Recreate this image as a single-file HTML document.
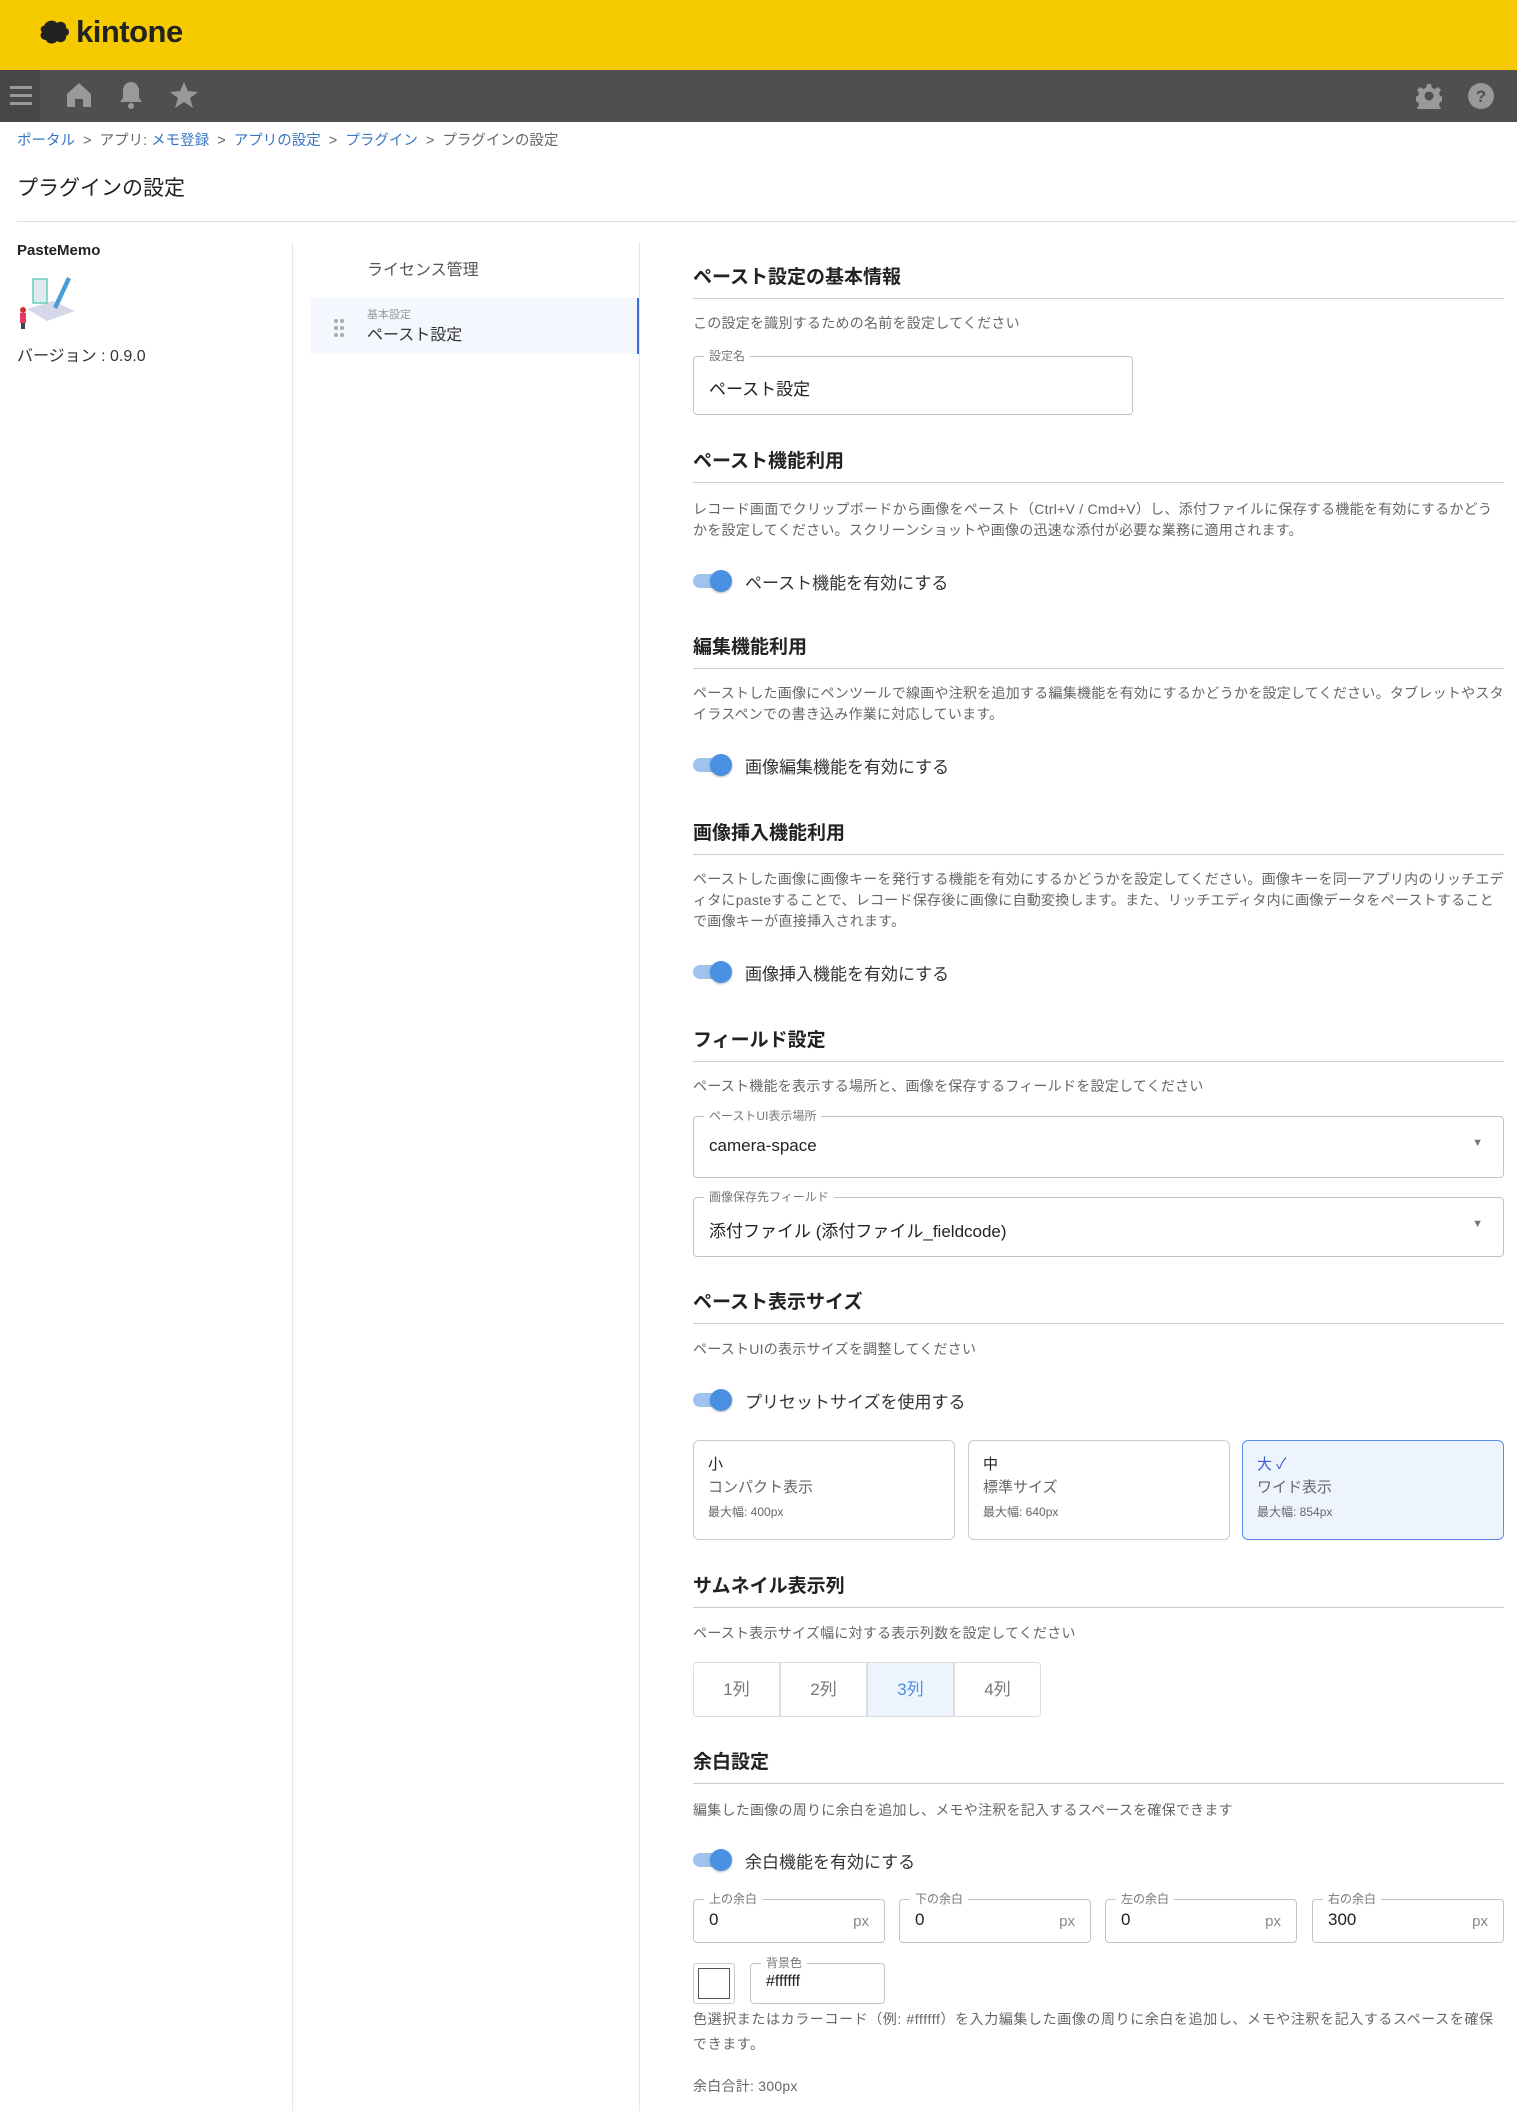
<!DOCTYPE html>
<html><head><meta charset="utf-8"><style>
*{box-sizing:border-box;margin:0;padding:0}
body{width:1517px;height:2111px;position:relative;background:#fff;font-family:"Liberation Sans","Noto Sans CJK JP",sans-serif;color:#333;overflow:hidden}
.a{position:absolute}
.h{position:absolute;left:693px;width:811px;font-size:19px;font-weight:bold;color:#222;border-bottom:1px solid #ccc;padding-bottom:8px;line-height:24px}
.d{position:absolute;left:693px;width:811px;font-size:14px;letter-spacing:0.25px;color:#666;line-height:21px}
.tg{position:absolute;left:693px;height:24px;display:flex;align-items:center;font-size:17px;color:#333}
.tg i{display:block;width:36px;height:14px;border-radius:7px;background:#9ec3ef;position:relative;margin-right:16px}
.tg i:after{content:"";position:absolute;right:-3px;top:-4px;width:22px;height:22px;border-radius:50%;background:#4a90e2;box-shadow:0 1px 2px rgba(0,0,0,.3)}
.f{position:absolute;border:1px solid #c4c4c4;border-radius:4px}
.f label{position:absolute;top:-9px;left:10px;background:#fff;padding:0 5px;font-size:12px;color:#777;line-height:16px}
.f span.v{position:absolute;left:15px;font-size:17px;color:#222}
.px{position:absolute;right:15px;top:13px;font-size:15px;color:#888}
.card{position:absolute;top:1440px;height:100px;border:1px solid #ccc;border-radius:6px;padding:14px 14px}
.card b{display:block;font-weight:normal;font-size:15px;color:#222;line-height:20px}
.card s{display:block;text-decoration:none;font-size:15px;color:#666;line-height:26px}
.card u{display:block;text-decoration:none;font-size:12px;color:#666;line-height:22px}
.btn{position:absolute;top:1662px;height:55px;width:87px;border:1px solid #ddd;text-align:center;line-height:53px;font-size:17px;color:#777}
.dot{position:absolute;width:4px;height:4px;border-radius:50%;background:#aaa}
</style></head><body>
<div class="a" style="left:0;top:0;width:1517px;height:70px;background:#f5cb00"></div>
<div class="a" style="left:38px;top:18px;width:32px;height:30px">
<svg width="32" height="30" viewBox="0 0 32 30"><path d="M6 8c2-6 10-7 13-3 4-3 10 0 9 5 4 1 4 7 0 8 1 5-5 8-9 5-3 4-10 3-11-1-5 0-7-5-4-8-3-3 0-7 2-6z" fill="#222"/></svg></div>
<div class="a" style="left:76px;top:14px;font-size:31px;font-weight:bold;color:#222;letter-spacing:-0.5px">kintone</div>
<div class="a" style="left:0;top:70px;width:1517px;height:52px;background:#4f4f4f"></div>
<div class="a" style="left:0;top:70px;width:40px;height:52px;background:#474747"></div>
<svg class="a" style="left:10px;top:84px" width="22" height="22" viewBox="0 0 22 22" fill="#999"><rect y="2" width="22" height="3"/><rect y="10" width="22" height="3"/><rect y="18" width="22" height="3"/></svg>
<svg class="a" style="left:66px;top:82px" width="26" height="26" viewBox="0 0 26 26" fill="#999"><path d="M13 1L1 12v13h8v-8h8v8h8V12z"/></svg>
<svg class="a" style="left:118px;top:81px" width="26" height="28" viewBox="0 0 26 28" fill="#999"><path d="M13 1c-5 0-8 4-8 9v7l-3 4h22l-3-4v-7c0-5-3-9-8-9z"/><circle cx="13" cy="25" r="3"/></svg>
<svg class="a" style="left:170px;top:82px" width="28" height="26" viewBox="0 0 28 26" fill="#999"><path d="M14 0l4 9 10 1-8 6 3 10-9-6-9 6 3-10-8-6 10-1z"/></svg>
<svg class="a" style="left:1416px;top:83px" width="26" height="26" viewBox="0 0 26 26"><path fill="#999" d="M11 1h4l1 4 3 1 3-2 3 3-2 3 1 3 4 1v4l-4 1-1 3 2 3-3 3-3-2-3 1-1 4h-4l-1-4-3-1-3 2-3-3 2-3-1-3-4-1v-4l4-1 1-3-2-3 3-3 3 2 3-1z"/><circle cx="13" cy="13" r="4.5" fill="#4f4f4f"/></svg>
<svg class="a" style="left:1468px;top:83px" width="26" height="26" viewBox="0 0 26 26"><circle cx="13" cy="13" r="13" fill="#999"/><text x="13" y="19" font-size="17" font-weight="bold" text-anchor="middle" fill="#4f4f4f" font-family="Liberation Sans">?</text></svg>
<div class="a" style="left:17px;top:131px;font-size:14.5px;color:#666;line-height:20px"><span style="color:#3b76c4">ポータル</span> &nbsp;&gt;&nbsp; アプリ: <span style="color:#3b76c4">メモ登録</span> &nbsp;&gt;&nbsp; <span style="color:#3b76c4">アプリの設定</span> &nbsp;&gt;&nbsp; <span style="color:#3b76c4">プラグイン</span> &nbsp;&gt;&nbsp; プラグインの設定</div>
<div class="a" style="left:17px;top:172px;font-size:21px;color:#222">プラグインの設定</div>
<div class="a" style="left:17px;top:221px;width:1500px;height:1px;background:#ddd"></div>
<div class="a" style="left:17px;top:242px;font-size:15px;font-weight:bold;color:#222">PasteMemo</div>
<svg class="a" style="left:17px;top:275px" width="62" height="55" viewBox="0 0 62 55"><path d="M10 34l26-8 22 10-28 10z" fill="#d7d7ea"/><rect x="16" y="4" width="14" height="24" fill="#dfe9f2" stroke="#6cb" stroke-width="1.5"/><path d="M36 32l14-30 4 2-14 30z" fill="#4a9ed8"/><circle cx="6" cy="35" r="3" fill="#c33"/><rect x="3" y="38" width="6" height="10" fill="#e03a6b"/><rect x="4" y="48" width="4" height="6" fill="#345"/></svg>
<div class="a" style="left:17px;top:342px;font-size:16px;color:#333">バージョン : 0.9.0</div>
<div class="a" style="left:292px;top:242px;width:1px;height:1869px;background:#e5e5e5"></div>
<div class="a" style="left:639px;top:242px;width:1px;height:1869px;background:#e5e5e5"></div>
<div class="a" style="left:367px;top:256px;font-size:16px;color:#555">ライセンス管理</div>
<div class="a" style="left:311px;top:298px;width:328px;height:56px;background:#f4f7fd;border-right:2px solid #3b6fd8"></div>
<div class="dot" style="left:334px;top:319px"></div><div class="dot" style="left:340px;top:319px"></div>
<div class="dot" style="left:334px;top:326px"></div><div class="dot" style="left:340px;top:326px"></div>
<div class="dot" style="left:334px;top:333px"></div><div class="dot" style="left:340px;top:333px"></div>
<div class="a" style="left:367px;top:306px;font-size:11px;color:#999">基本設定</div>
<div class="a" style="left:367px;top:321px;font-size:16px;color:#333">ペースト設定</div>

<div class="h" style="top:266px">ペースト設定の基本情報</div>
<div class="d" style="top:313px">この設定を識別するための名前を設定してください</div>
<div class="f" style="left:693px;top:356px;width:440px;height:59px"><label>設定名</label><span class="v" style="top:18px">ペースト設定</span></div>

<div class="h" style="top:450px">ペースト機能利用</div>
<div class="d" style="top:499px">レコード画面でクリップボードから画像をペースト（Ctrl+V / Cmd+V）し、添付ファイルに保存する機能を有効にするかどうかを設定してください。スクリーンショットや画像の迅速な添付が必要な業務に適用されます。</div>
<div class="tg" style="top:569px"><i></i>ペースト機能を有効にする</div>

<div class="h" style="top:636px">編集機能利用</div>
<div class="d" style="top:683px">ペーストした画像にペンツールで線画や注釈を追加する編集機能を有効にするかどうかを設定してください。タブレットやスタイラスペンでの書き込み作業に対応しています。</div>
<div class="tg" style="top:753px"><i></i>画像編集機能を有効にする</div>

<div class="h" style="top:822px">画像挿入機能利用</div>
<div class="d" style="top:869px">ペーストした画像に画像キーを発行する機能を有効にするかどうかを設定してください。画像キーを同一アプリ内のリッチエディタにpasteすることで、レコード保存後に画像に自動変換します。また、リッチエディタ内に画像データをペーストすることで画像キーが直接挿入されます。</div>
<div class="tg" style="top:960px"><i></i>画像挿入機能を有効にする</div>

<div class="h" style="top:1029px">フィールド設定</div>
<div class="d" style="top:1076px">ペースト機能を表示する場所と、画像を保存するフィールドを設定してください</div>
<div class="f" style="left:693px;top:1116px;width:811px;height:62px"><label>ペーストUI表示場所</label><span class="v" style="top:19px">camera-space</span><span class="a" style="right:20px;top:20px;font-size:11px;color:#777">▼</span></div>
<div class="f" style="left:693px;top:1197px;width:811px;height:60px"><label>画像保存先フィールド</label><span class="v" style="top:19px">添付ファイル (添付ファイル_fieldcode)</span><span class="a" style="right:20px;top:20px;font-size:11px;color:#777">▼</span></div>

<div class="h" style="top:1291px">ペースト表示サイズ</div>
<div class="d" style="top:1339px">ペーストUIの表示サイズを調整してください</div>
<div class="tg" style="top:1388px"><i></i>プリセットサイズを使用する</div>
<div class="card" style="left:693px;width:262px"><b>小</b><s>コンパクト表示</s><u>最大幅: 400px</u></div>
<div class="card" style="left:968px;width:262px"><b>中</b><s>標準サイズ</s><u>最大幅: 640px</u></div>
<div class="card" style="left:1242px;width:262px;border-color:#5b8de8;background:#eef4fe"><b style="color:#3b5bd8">大 ✓</b><s>ワイド表示</s><u>最大幅: 854px</u></div>

<div class="h" style="top:1575px">サムネイル表示列</div>
<div class="d" style="top:1623px">ペースト表示サイズ幅に対する表示列数を設定してください</div>
<div class="btn" style="left:693px;border-radius:4px 0 0 4px">1列</div>
<div class="btn" style="left:780px">2列</div>
<div class="btn" style="left:867px;background:#eef4fd;color:#4a90e2">3列</div>
<div class="btn" style="left:954px;border-radius:0 4px 4px 0">4列</div>

<div class="h" style="top:1751px">余白設定</div>
<div class="d" style="top:1800px">編集した画像の周りに余白を追加し、メモや注釈を記入するスペースを確保できます</div>
<div class="tg" style="top:1848px"><i></i>余白機能を有効にする</div>
<div class="f" style="left:693px;top:1899px;width:192px;height:44px"><label>上の余白</label><span class="v" style="top:10px">0</span><span class="px">px</span></div>
<div class="f" style="left:899px;top:1899px;width:192px;height:44px"><label>下の余白</label><span class="v" style="top:10px">0</span><span class="px">px</span></div>
<div class="f" style="left:1105px;top:1899px;width:192px;height:44px"><label>左の余白</label><span class="v" style="top:10px">0</span><span class="px">px</span></div>
<div class="f" style="left:1312px;top:1899px;width:192px;height:44px"><label>右の余白</label><span class="v" style="top:10px">300</span><span class="px">px</span></div>
<div class="a" style="left:693px;top:1963px;width:42px;height:41px;border:1px solid #ccc;border-radius:3px;padding:4px"><div style="width:100%;height:100%;border:1px solid #555"></div></div>
<div class="f" style="left:750px;top:1963px;width:135px;height:41px"><label>背景色</label><span class="v" style="top:9px;font-size:16px">#ffffff</span></div>
<div class="d" style="top:2007px;font-size:14px;letter-spacing:0.6px;line-height:25px">色選択またはカラーコード（例: #ffffff）を入力編集した画像の周りに余白を追加し、メモや注釈を記入するスペースを確保できます。</div>
<div class="d" style="top:2076px">余白合計: 300px</div>
</body></html>
